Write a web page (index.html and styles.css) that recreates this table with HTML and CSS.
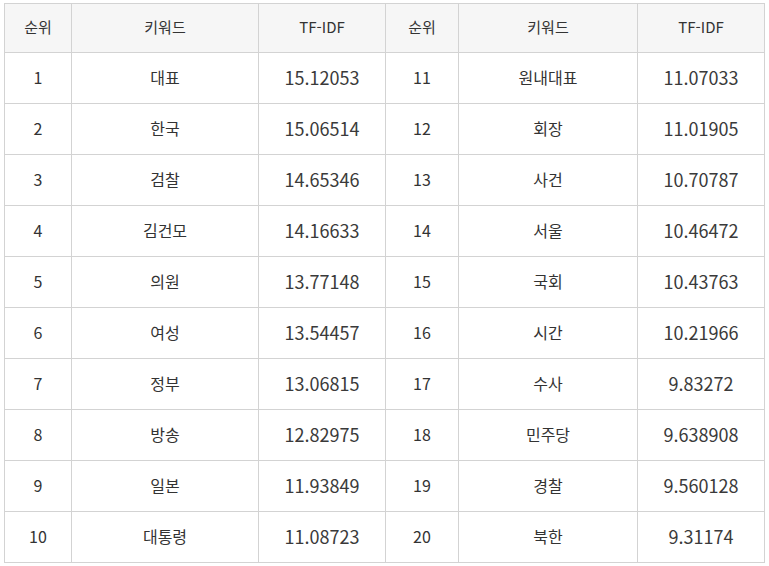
FILE: index.html
```html
<!DOCTYPE html>
<html lang="ko">
<head>
<meta charset="utf-8">
<link rel="stylesheet" href="styles.css">
</head>
<body>
<table class="kw">
  <colgroup>
    <col class="c-rank"><col class="c-word"><col class="c-val">
    <col class="c-rank2"><col class="c-word2"><col class="c-val2">
  </colgroup>
  <thead>
    <tr><th>순위</th><th>키워드</th><th>TF-IDF</th><th>순위</th><th>키워드</th><th>TF-IDF</th></tr>
  </thead>
  <tbody>
    <tr><td>1</td><td>대표</td><td class="v">15.12053</td><td>11</td><td>원내대표</td><td class="v">11.07033</td></tr>
    <tr><td>2</td><td>한국</td><td class="v">15.06514</td><td>12</td><td>회장</td><td class="v">11.01905</td></tr>
    <tr><td>3</td><td>검찰</td><td class="v">14.65346</td><td>13</td><td>사건</td><td class="v">10.70787</td></tr>
    <tr><td>4</td><td>김건모</td><td class="v">14.16633</td><td>14</td><td>서울</td><td class="v">10.46472</td></tr>
    <tr><td>5</td><td>의원</td><td class="v">13.77148</td><td>15</td><td>국회</td><td class="v">10.43763</td></tr>
    <tr><td>6</td><td>여성</td><td class="v">13.54457</td><td>16</td><td>시간</td><td class="v">10.21966</td></tr>
    <tr><td>7</td><td>정부</td><td class="v">13.06815</td><td>17</td><td>수사</td><td class="v">9.83272</td></tr>
    <tr><td>8</td><td>방송</td><td class="v">12.82975</td><td>18</td><td>민주당</td><td class="v">9.638908</td></tr>
    <tr><td>9</td><td>일본</td><td class="v">11.93849</td><td>19</td><td>경찰</td><td class="v">9.560128</td></tr>
    <tr><td>10</td><td>대통령</td><td class="v">11.08723</td><td>20</td><td>북한</td><td class="v">9.31174</td></tr>
  </tbody>
</table>
</body>
</html>
```
FILE: styles.css
```css
html, body {
  margin: 0;
  padding: 0;
  background: #ffffff;
}
body {
  padding: 3px 0 0 4px;
  font-family: "Noto Sans CJK KR", "Noto Sans", sans-serif;
  color: #333333;
}
.kw {
  border-collapse: collapse;
  table-layout: fixed;
  width: 760px;
}
.c-rank { width: 67px; }
.c-word { width: 187px; }
.c-val { width: 127px; }
.c-rank2 { width: 73px; }
.c-word2 { width: 179px; }
.c-val2 { width: 127px; }
.kw th, .kw td {
  border: 1px solid #d3d3d3;
  text-align: center;
  padding: 0;
  font-weight: 400;
}
.kw th {
  height: 45px;
  padding-bottom: 3px;
  background: #f6f6f6;
  font-size: 15px;
}
.kw td {
  height: 48px;
  padding-bottom: 2px;
  font-size: 16px;
}
.kw td.v {
  font-size: 18px;
  color: #3a3a3a;
}
```
